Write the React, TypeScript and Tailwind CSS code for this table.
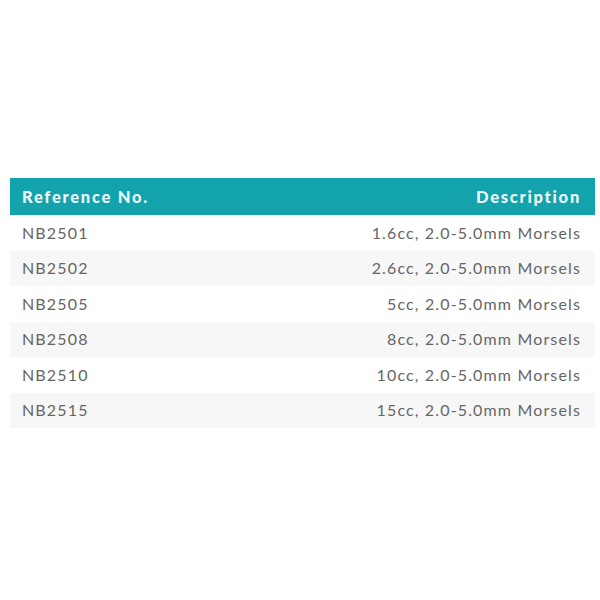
const rows = [
  ["NB2501", "1.6cc, 2.0-5.0mm Morsels"],
  ["NB2502", "2.6cc, 2.0-5.0mm Morsels"],
  ["NB2505", "5cc, 2.0-5.0mm Morsels"],
  ["NB2508", "8cc, 2.0-5.0mm Morsels"],
  ["NB2510", "10cc, 2.0-5.0mm Morsels"],
  ["NB2515", "15cc, 2.0-5.0mm Morsels"],
];

export default function App() {
  return (
    <div className="w-[600px] h-[600px] bg-white pt-[178px] px-[10px] font-['Lato',sans-serif]">
      <div className="w-[585px]">
        <div className="h-[37px] bg-[#12a3ad] flex items-center justify-between pl-[12px] pr-[14px] pt-px text-[16.5px] font-black tracking-[1.75px] text-[#eef8f8]">
          <span>Reference No.</span>
          <span>Description</span>
        </div>
        {rows.map(([ref, desc], i) => (
          <div
            key={ref}
            className={`h-[35.5px] flex items-center justify-between pl-[12px] pr-[14px] text-[16px] tracking-[1.15px] text-[#666666] ${
              i % 2 === 1 ? "bg-[#f7f7f7]" : "bg-white"
            }`}
          >
            <span>{ref}</span>
            <span>{desc}</span>
          </div>
        ))}
      </div>
    </div>
  );
}
